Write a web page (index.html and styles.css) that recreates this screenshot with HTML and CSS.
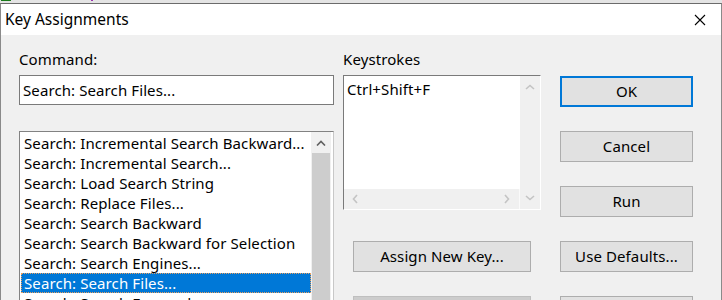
FILE: index.html
```html
<!DOCTYPE html>
<html>
<head>
<meta charset="utf-8">
<link rel="stylesheet" href="styles.css">
</head>
<body>
<div class="strip"><span class="mark green"></span><span class="mark purple"></span></div>
<div class="window">
  <div class="titlebar">
    <span class="title">Key Assignments</span>
    <span class="close"><svg width="12" height="12" viewBox="0 0 12 12"><path d="M1 1L11 11M11 1L1 11" stroke="#000" stroke-width="1.1" fill="none"/></svg></span>
  </div>
  <div class="client">
    <div class="col col-cmd">
      <div class="label">Command:</div>
      <div class="textbox">Search: Search Files...</div>
      <div class="listbox">
        <ul class="items">
          <li>Search: Incremental Search Backward...</li>
          <li>Search: Incremental Search...</li>
          <li>Search: Load Search String</li>
          <li>Search: Replace Files...</li>
          <li>Search: Search Backward</li>
          <li>Search: Search Backward for Selection</li>
          <li>Search: Search Engines...</li>
          <li class="sel">Search: Search Files...</li>
          <li>Search: Search Forward</li>
        </ul>
        <div class="vscroll">
          <div class="arrow"><svg width="10" height="6" viewBox="0 0 10 6"><path d="M1 5.5L5 1.5L9 5.5" stroke="#606060" stroke-width="1.6" fill="none"/></svg></div>
          <div class="thumb"></div>
        </div>
      </div>
    </div>
    <div class="col col-keys">
      <div class="label">Keystrokes</div>
      <div class="keybox">
        <div class="keymain">
          <div class="keytext">Ctrl+Shift+F</div>
          <div class="hscroll">
            <svg width="6" height="10" viewBox="0 0 6 10"><path d="M5 1L1.5 5L5 9" stroke="#c4c4c4" stroke-width="1.6" fill="none"/></svg>
            <svg width="6" height="10" viewBox="0 0 6 10"><path d="M1 1L4.5 5L1 9" stroke="#c4c4c4" stroke-width="1.6" fill="none"/></svg>
          </div>
        </div>
        <div class="kvscroll">
          <svg width="10" height="6" viewBox="0 0 10 6"><path d="M1 5L5 1.5L9 5" stroke="#c4c4c4" stroke-width="1.6" fill="none"/></svg>
          <svg width="10" height="6" viewBox="0 0 10 6"><path d="M1 1L5 4.5L9 1" stroke="#c4c4c4" stroke-width="1.6" fill="none"/></svg>
        </div>
      </div>
      <button class="btn wide">Assign New Key...</button>
      <button class="btn wide dim">&nbsp;</button>
    </div>
    <div class="col col-btns">
      <button class="btn default">OK</button>
      <button class="btn">Cancel</button>
      <button class="btn">Run</button>
      <button class="btn">Use Defaults...</button>
      <button class="btn">&nbsp;</button>
    </div>
  </div>
</div>
</body>
</html>
```

FILE: styles.css
```css
html, body {
  margin: 0;
  padding: 0;
  width: 722px;
  height: 300px;
  overflow: hidden;
  background: #f0f0f0;
  font-family: "Noto Sans", "Open Sans", sans-serif;
  font-size: 15px;
  letter-spacing: 0.1px;
  color: #000;
}

.strip {
  height: 3px;
  background: #e4e4e4;
  display: flex;
  align-items: flex-start;
}
.mark {
  display: block;
  height: 1px;
}
.green {
  width: 10px;
  margin-left: 1px;
  background: #1a7a1a;
}
.purple {
  width: 2px;
  margin-left: 80px;
  background: #9a30b0;
}

.window {
  border-top: 1px solid #6b6b6b;
  border-left: 1px solid #8a8a8a;
  border-right: 1px solid #8a8a8a;
  height: 296px;
  background: #f0f0f0;
  overflow: hidden;
}

.titlebar {
  height: 31px;
  background: #fff;
  display: flex;
  align-items: center;
  justify-content: space-between;
}
.title {
  font-size: 15.5px;
  letter-spacing: 0;
  padding-left: 4px;
  line-height: 31px;
}
.close {
  display: flex;
  width: 12px;
  height: 12px;
  margin-right: 15px;
  margin-top: 1px;
}

.client {
  display: flex;
  padding-left: 18px;
  padding-top: 14px;
  align-items: flex-start;
}

.col {
  display: flex;
  flex-direction: column;
}
.col-cmd { width: 315px; }
.col-keys { width: 198px; margin-left: 9px; }
.col-btns { width: 133px; margin-left: 19px; padding-top: 27px; gap: 24px; }

.label {
  line-height: 20px;
  height: 20px;
}

.textbox {
  margin-top: 6px;
  height: 28px;
  border: 1px solid #7a7a7a;
  background: #fff;
  line-height: 28px;
  padding-left: 3px;
  white-space: nowrap;
}

.listbox {
  margin-top: 26px;
  height: 200px;
  display: flex;
  border-top: 1px solid #828282;
  border-left: 1px solid #828282;
  border-right: 1px solid #c8c8c8;
  background: #fff;
  overflow: hidden;
}
.items {
  list-style: none;
  margin: 0;
  padding: 1px 0 0 1px;
  width: 290px;
}
.items li {
  height: 20px;
  line-height: 20px;
  padding-left: 3px;
  white-space: nowrap;
  box-sizing: border-box;
}
.items li.sel {
  background: #0078d7;
  color: #fff;
  outline: 1px dotted #e8a060;
  outline-offset: -1px;
}
.vscroll {
  width: 20px;
  margin-left: 0;
  background: #f0f0f0;
  display: flex;
  flex-direction: column;
}
.vscroll .arrow {
  height: 21px;
  display: flex;
  align-items: center;
  justify-content: center;
}
.vscroll .thumb {
  flex: 1;
  background: #cdcdcd;
  margin: 0 1px;
}

.keybox {
  margin-top: 6px;
  height: 133px;
  display: flex;
  border-top: 1px solid #7a7a7a;
  border-left: 1px solid #7a7a7a;
  border-right: 1px solid #fff;
  border-bottom: 1px solid #fff;
  background: #fff;
}
.keymain {
  flex: 1;
  display: flex;
  flex-direction: column;
}
.keytext {
  flex: 1;
  padding: 3px 0 0 3px;
  line-height: 20px;
}
.hscroll {
  height: 20px;
  background: #f0f0f0;
  display: flex;
  align-items: center;
  justify-content: space-between;
  padding: 0 9px 0 8px;
  border-right: 1px solid #fafafa;
}
.kvscroll {
  width: 20px;
  background: #f0f0f0;
  display: flex;
  flex-direction: column;
  justify-content: space-between;
  align-items: center;
  padding: 8px 0 8px;
}

.btn {
  font-family: inherit;
  font-size: 15px;
  letter-spacing: 0.1px;
  color: #000;
  height: 31px;
  background: #e1e1e1;
  border: 1px solid #adadad;
  padding: 0;
  margin: 0;
  line-height: 29px;
}
.btn.default {
  border: 2px solid #0078d7;
  line-height: 27px;
}
.btn.wide {
  width: 178px;
  margin-left: 10px;
  margin-top: 31px;
}
.btn.wide + .btn.wide {
  margin-top: 24px;
}
.btn.dim {
  background: #cccccc;
  border-color: #bfbfbf;
}
```
